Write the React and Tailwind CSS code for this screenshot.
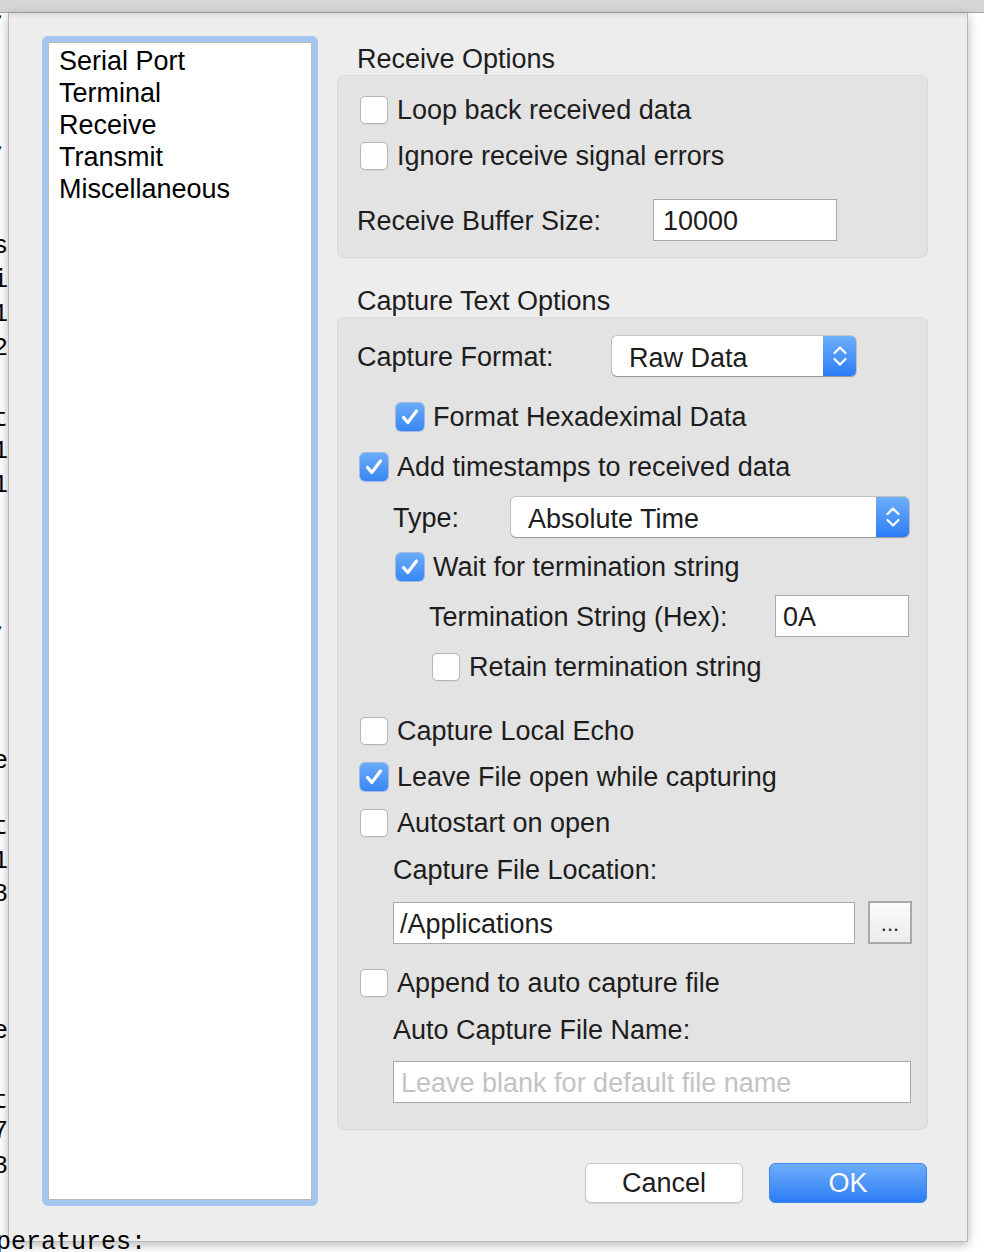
import React from 'react';

const bgChars = [
  { top: -17, ch: ',' },
  { top: 114, ch: ',' },
  { top: 217, ch: 's' },
  { top: 251, ch: 'i' },
  { top: 285, ch: '1' },
  { top: 319, ch: '2' },
  { top: 390, ch: 't' },
  { top: 422, ch: '1' },
  { top: 456, ch: '1' },
  { top: 594, ch: ',' },
  { top: 732, ch: 'e' },
  { top: 798, ch: 't' },
  { top: 832, ch: '1' },
  { top: 865, ch: '8' },
  { top: 1002, ch: 'e' },
  { top: 1072, ch: 't' },
  { top: 1102, ch: '7' },
  { top: 1137, ch: '8' },
];

const CheckBox = ({ checked }) =>
  checked ? (
    <span className="w-[28px] h-[28px] shrink-0 rounded-[5px] bg-linear-to-b from-[#6aabf9] to-[#3787f4] flex items-center justify-center shadow-[0_0_0_1px_rgba(40,110,220,0.35)]">
      <svg width="28" height="28" viewBox="0 0 28 28">
        <path d="M7.5 14.5 L11.8 19.5 L20.5 8" fill="none" stroke="white" strokeWidth="3.2" strokeLinecap="round" strokeLinejoin="round" />
      </svg>
    </span>
  ) : (
    <span className="w-[28px] h-[28px] shrink-0 rounded-[5px] bg-white border border-[#b5b5b5] shadow-[0_1px_1px_rgba(0,0,0,0.06)]" />
  );

const CheckRow = ({ checked, label, className = '' }) => (
  <div className={`flex items-center gap-[9px] h-[28px] ${className}`}>
    <CheckBox checked={checked} />
    <span className="leading-[32px] whitespace-nowrap">{label}</span>
  </div>
);

const Popup = ({ value, className = '' }) => (
  <div className={`h-[40px] flex rounded-[5px] bg-white shadow-[0_0_0_1px_rgba(0,0,0,0.14),0_1px_1px_rgba(0,0,0,0.22)] ${className}`}>
    <span className="flex-1 pl-[17px] leading-[44px] whitespace-nowrap">{value}</span>
    <span className="w-[33px] h-full rounded-r-[5px] bg-linear-to-b from-[#6eaefa] to-[#2a7cf5] flex items-center justify-center">
      <svg width="20" height="28" viewBox="0 0 20 28">
        <path d="M4.5 11 L10 5.5 L15.5 11" fill="none" stroke="white" strokeWidth="2.2" strokeLinecap="round" strokeLinejoin="round" />
        <path d="M4.5 17 L10 22.5 L15.5 17" fill="none" stroke="white" strokeWidth="2.2" strokeLinecap="round" strokeLinejoin="round" />
      </svg>
    </span>
  </div>
);

const TextField = ({ value, placeholder, className = '' }) => (
  <div className={`h-[42px] bg-white border border-[#a9a9a9] flex items-center whitespace-nowrap pt-[3px] ${className}`}>
    {value ? <span>{value}</span> : <span className="text-[#c3c3c3]">{placeholder}</span>}
  </div>
);

export default function App() {
  return (
    <div className="w-[984px] h-[1252px] bg-white overflow-hidden flex flex-col font-['Liberation_Sans',Arial,sans-serif] text-[27px] text-[#1d1d1d]">
      {/* title bar of the window behind */}
      <div className="h-[13px] shrink-0 bg-[#d6d4d6] border-b border-[#a3a3a3]" />

      <div className="flex h-[1229px] shrink-0">
        {/* terminal text peeking out on the left */}
        <div className="relative w-[8px] shrink-0 overflow-hidden font-['Liberation_Mono',monospace] text-[25px] text-black">
          {bgChars.map((c, i) => (
            <span key={i} className="absolute right-0 h-[34px] leading-[34px]" style={{ top: c.top }}>
              {c.ch}
            </span>
          ))}
        </div>

        {/* sheet */}
        <div className="relative w-[960px] shrink-0 bg-[#ededed] border-x border-b border-[#b9b9b9] shadow-[0_3px_10px_rgba(0,0,0,0.28),inset_0_6px_5px_-4px_rgba(0,0,0,0.09)] flex items-start pl-[33px] pt-[23px]">
          {/* category list */}
          <div className="w-[276px] h-[1170px] shrink-0 rounded-[6px] bg-[#a4c6f0] p-[6px]">
            <div className="h-full bg-white border border-[#b9b9b9] pt-[2px] pl-[10px]">
              {['Serial Port', 'Terminal', 'Receive', 'Transmit', 'Miscellaneous'].map((item) => (
                <div key={item} className="leading-[32px] text-black">
                  {item}
                </div>
              ))}
            </div>
          </div>

          {/* options */}
          <div className="ml-[19px] w-[591px] pt-[7px] flex flex-col">
            <div className="h-[32px] leading-[32px] pl-[20px]">Receive Options</div>
            <div className="h-[183px] rounded-[7px] bg-[#e3e3e3] border border-[#d9d9d9] pt-[11px] pl-[22px] flex flex-col">
              <div className="h-[46px] flex items-center">
                <CheckRow label="Loop back received data" />
              </div>
              <div className="h-[46px] flex items-center">
                <CheckRow label="Ignore receive signal errors" />
              </div>
              <div className="mt-[20px] h-[42px] flex items-center -ml-[3px]">
                <span className="w-[296px] whitespace-nowrap pt-[3px]">Receive Buffer Size:</span>
                <TextField value="10000" className="w-[184px] pl-[9px]" />
              </div>
            </div>

            <div className="mt-[27px] h-[32px] leading-[32px] pl-[20px]">Capture Text Options</div>
            <div className="h-[813px] rounded-[7px] bg-[#e3e3e3] border border-[#d9d9d9] pt-[18px] flex flex-col">
              <div className="h-[40px] flex items-center pl-[19px]">
                <span className="w-[255px] whitespace-nowrap pt-[3px]">Capture Format:</span>
                <Popup value="Raw Data" className="w-[244px]" />
              </div>
              <CheckRow checked label="Format Hexadeximal Data" className="mt-[27px] ml-[58px]" />
              <CheckRow checked label="Add timestamps to received data" className="mt-[22px] ml-[22px]" />
              <div className="mt-[16px] h-[40px] flex items-center pl-[55px]">
                <span className="w-[118px] pt-[3px]">Type:</span>
                <Popup value="Absolute Time" className="w-[398px]" />
              </div>
              <CheckRow checked label="Wait for termination string" className="mt-[16px] ml-[58px]" />
              <div className="mt-[14px] h-[42px] flex items-center pl-[91px]">
                <span className="w-[346px] whitespace-nowrap pt-[3px]">Termination String (Hex):</span>
                <TextField value="0A" className="w-[134px] pl-[7px]" />
              </div>
              <CheckRow label="Retain termination string" className="mt-[16px] ml-[94px]" />
              <CheckRow label="Capture Local Echo" className="mt-[36px] ml-[22px]" />
              <CheckRow checked label="Leave File open while capturing" className="mt-[18px] ml-[22px]" />
              <CheckRow label="Autostart on open" className="mt-[18px] ml-[22px]" />
              <div className="mt-[17px] h-[32px] leading-[32px] pl-[55px]">Capture File Location:</div>
              <div className="mt-[15px] h-[43px] flex items-center pl-[55px] gap-[13px]">
                <TextField value="/Applications" className="w-[462px] pl-[6px]" />
                <div className="w-[44px] h-[43px] border-2 border-[#a9a9a9] bg-linear-to-b from-[#fbfbfb] to-[#ebebeb] flex items-center justify-center text-[22px] leading-none pt-[2px]">
                  ...
                </div>
              </div>
              <CheckRow label="Append to auto capture file" className="mt-[25px] ml-[22px]" />
              <div className="mt-[17px] h-[32px] leading-[32px] pl-[55px]">Auto Capture File Name:</div>
              <div className="mt-[15px] pl-[55px]">
                <TextField placeholder="Leave blank for default file name" className="w-[518px] pl-[7px]" />
              </div>
            </div>

            <div className="mt-[33px] flex justify-end gap-[26px] pr-[1px]">
              <button className="w-[158px] h-[40px] rounded-[6px] bg-white border border-[#c6c6c6] shadow-[0_1px_1px_rgba(0,0,0,0.12)] text-[#1d1d1d] leading-none">
                Cancel
              </button>
              <button className="w-[158px] h-[40px] rounded-[6px] bg-linear-to-b from-[#6dadf9] to-[#2c7cf6] border border-[#3f86ef] text-white leading-none">
                OK
              </button>
            </div>
          </div>
        </div>

        <div className="w-[16px] shrink-0" />
      </div>

      {/* last terminal line below the sheet */}
      <div className="relative h-[10px] shrink-0">
        <span className="absolute -left-[4px] -top-[14px] font-['Liberation_Mono',monospace] text-[25px] leading-[30px] text-black">
          peratures:
        </span>
      </div>
    </div>
  );
}
